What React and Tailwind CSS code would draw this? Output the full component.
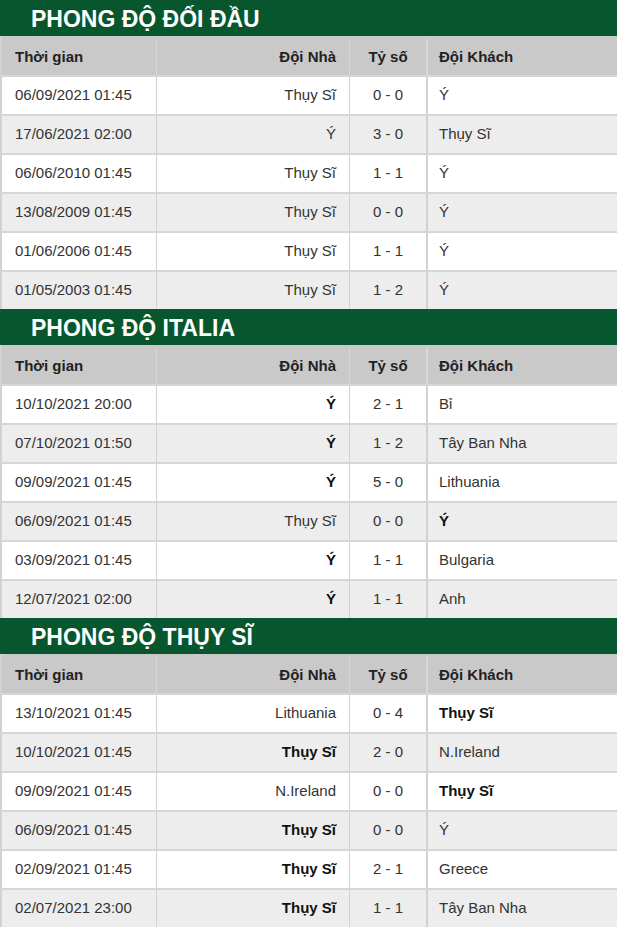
import React from 'react'

const sections = [
  {
    title: 'PHONG ĐỘ ĐỐI ĐẦU',
    rows: [
      ['06/09/2021 01:45', 'Thụy Sĩ', '0 - 0', 'Ý'],
      ['17/06/2021 02:00', 'Ý', '3 - 0', 'Thụy Sĩ'],
      ['06/06/2010 01:45', 'Thụy Sĩ', '1 - 1', 'Ý'],
      ['13/08/2009 01:45', 'Thụy Sĩ', '0 - 0', 'Ý'],
      ['01/06/2006 01:45', 'Thụy Sĩ', '1 - 1', 'Ý'],
      ['01/05/2003 01:45', 'Thụy Sĩ', '1 - 2', 'Ý'],
    ],
    bold: null,
  },
  {
    title: 'PHONG ĐỘ ITALIA',
    rows: [
      ['10/10/2021 20:00', 'Ý', '2 - 1', 'Bỉ'],
      ['07/10/2021 01:50', 'Ý', '1 - 2', 'Tây Ban Nha'],
      ['09/09/2021 01:45', 'Ý', '5 - 0', 'Lithuania'],
      ['06/09/2021 01:45', 'Thụy Sĩ', '0 - 0', 'Ý'],
      ['03/09/2021 01:45', 'Ý', '1 - 1', 'Bulgaria'],
      ['12/07/2021 02:00', 'Ý', '1 - 1', 'Anh'],
    ],
    bold: 'Ý',
  },
  {
    title: 'PHONG ĐỘ THỤY SĨ',
    rows: [
      ['13/10/2021 01:45', 'Lithuania', '0 - 4', 'Thụy Sĩ'],
      ['10/10/2021 01:45', 'Thụy Sĩ', '2 - 0', 'N.Ireland'],
      ['09/09/2021 01:45', 'N.Ireland', '0 - 0', 'Thụy Sĩ'],
      ['06/09/2021 01:45', 'Thụy Sĩ', '0 - 0', 'Ý'],
      ['02/09/2021 01:45', 'Thụy Sĩ', '2 - 1', 'Greece'],
      ['02/07/2021 23:00', 'Thụy Sĩ', '1 - 1', 'Tây Ban Nha'],
    ],
    bold: 'Thụy Sĩ',
  },
]

const grid = 'grid grid-cols-[155px_193px_78px_1fr] h-[39px] border-l-2 border-[#d2d2d2]'

function Section({ title, rows, bold }) {
  return (
    <div>
      <div className="h-[36px] bg-[#07562d] flex items-center pl-[31px]">
        <h2 className="text-white font-bold text-[23px] leading-none pt-[2px]">{title}</h2>
      </div>
      <div className={grid + ' bg-[#c9c9c9] text-[15px] font-bold text-[#222] pt-[3px]'}>
        <div className="flex items-center pl-[13px] border-r border-[#d8d8d8]">Thời gian</div>
        <div className="flex items-center justify-end pr-[13px] border-r border-[#d8d8d8]">Đội Nhà</div>
        <div className="flex items-center justify-center border-r-2 border-[#d8d8d8]">Tỷ số</div>
        <div className="flex items-center pl-[11px]">Đội Khách</div>
      </div>
      {rows.map((r, i) => (
        <div
          key={i}
          className={grid + ' border-t-2 text-[15px] text-[#333] ' + (i % 2 === 0 ? 'bg-white' : 'bg-[#ededed]')}
          style={{ borderTopColor: '#d6d6d6' }}
        >
          <div className="flex items-center pl-[13px] border-r border-[#d2d2d2]">{r[0]}</div>
          <div className={'flex items-center justify-end pr-[13px] border-r border-[#d2d2d2] ' + (r[1] === bold ? 'font-bold text-[#111]' : '')}>{r[1]}</div>
          <div className="flex items-center justify-center border-r-2 border-[#d2d2d2]">{r[2]}</div>
          <div className={'flex items-center pl-[11px] ' + (r[3] === bold ? 'font-bold text-[#111]' : '')}>{r[3]}</div>
        </div>
      ))}
    </div>
  )
}

export default function App() {
  return (
    <div className="w-[617px] bg-white font-['Liberation_Sans',Arial,sans-serif]">
      {sections.map((s) => (
        <Section key={s.title} {...s} />
      ))}
    </div>
  )
}
